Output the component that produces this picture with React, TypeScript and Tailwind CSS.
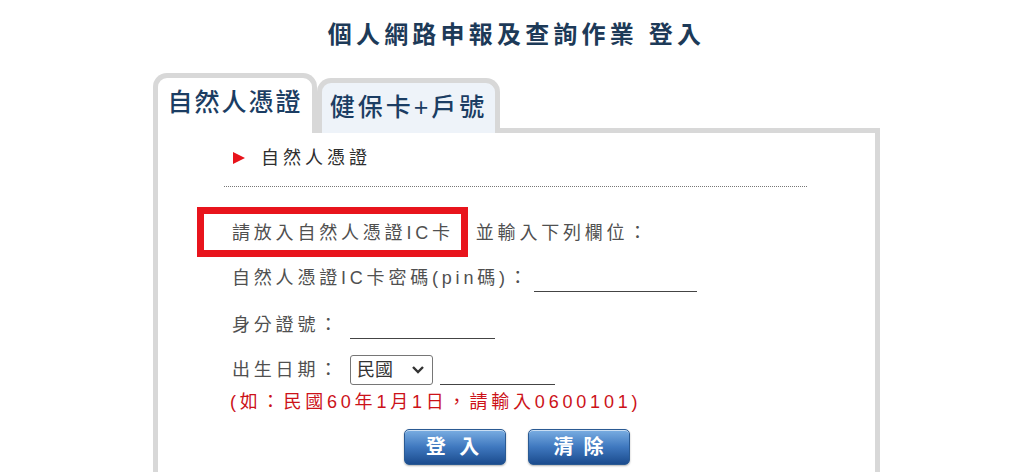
import React from "react";

const FONT = { fontFamily: '"Liberation Sans", "Noto Sans CJK TC", sans-serif' };

export default function App() {
  return (
    <div className="min-h-[472px] bg-white" style={FONT}>
      <div className="ml-[153px] w-[727px]">
        <h1 className="pt-[19px] h-[51px] text-center text-[24px] leading-[32px] font-bold tracking-[4.2px] text-[#1d3a58]">
          個人網路申報及查詢作業 登入
        </h1>

        {/* Tabs */}
        <div className="mt-[22px] flex items-end h-[60px]">
          <div className="relative z-10 w-[164px] h-[60px] rounded-t-[14px] border-[5px] border-b-0 border-[#d8d8d8] bg-white flex justify-center pt-[9px]">
            <span className="text-[25px] leading-[30px] font-medium tracking-[2px] text-[#1b3d63]">自然人憑證</span>
          </div>
          <div className="w-[183px] h-[55px] rounded-t-[14px] border-[5px] border-b-0 border-[#d8d8d8] bg-[#eef3f9] flex justify-center pt-[9px]">
            <span className="text-[25px] leading-[30px] font-medium tracking-[3px] text-[#1b3d63]">健保卡+戶號</span>
          </div>
        </div>

        {/* Panel */}
        <div className="-mt-[5px] h-[380px] border-[5px] border-b-0 border-[#d8d8d8] bg-white">
          <div className="ml-[66px] mt-[13px] pl-[9px] flex items-center h-[24px]">
            <svg width="12" height="12" viewBox="0 0 12 12" className="shrink-0">
              <polygon points="0,0 12,6 0,12" fill="#e8131b" />
            </svg>
            <span className="ml-[16px] text-[18px] leading-[24px] font-normal tracking-[4px] text-[#2e2e2e]">自然人憑證</span>
          </div>
          <div className="ml-[66px] mt-[16px] w-[583px] border-t border-dotted border-[#777]" />

          <div className="ml-[74px] text-[18px] tracking-[3.8px] text-[#505050]">
            <div className="mt-[31px] h-[30px] flex items-center">
              <span className="relative leading-[30px]">
                請放入自然人憑證IC卡
                <span className="absolute left-[-35px] top-[-11px] w-[271px] h-[50px] border-[7px] border-[#e8141c] pointer-events-none" />
              </span>
              <span className="ml-[22px] leading-[30px]">並輸入下列欄位：</span>
            </div>

            <div className="mt-[15px] h-[30px] flex items-end">
              <span className="leading-[30px] self-center">自然人憑證IC卡密碼(pin碼)：</span>
              <input
                type="password"
                className="ml-[3px] w-[163px] h-[26px] mb-[1px] bg-transparent border-0 border-b border-[#444] outline-none"
              />
            </div>

            <div className="mt-[17px] h-[30px] flex items-end">
              <span className="leading-[30px] self-center">身分證號：</span>
              <input
                type="text"
                className="ml-[9px] w-[145px] h-[26px] mb-[1px] bg-transparent border-0 border-b border-[#444] outline-none"
              />
            </div>

            <div className="mt-[15px] h-[30px] flex items-end">
              <span className="leading-[30px] self-center">出生日期：</span>
              <div className="relative ml-[9px] w-[83px] h-[30px]">
                <select className="appearance-none w-full h-full rounded-[3px] border border-[#767676] bg-white pl-[6px] text-[18px] tracking-normal text-[#333] outline-none">
                  <option>民國</option>
                  <option>西元</option>
                </select>
                <svg
                  className="absolute right-[8px] top-[10px] pointer-events-none"
                  width="14"
                  height="10"
                  viewBox="0 0 14 10"
                >
                  <polyline points="2,2 7,7 12,2" fill="none" stroke="#333" strokeWidth="2.4" />
                </svg>
              </div>
              <input
                type="text"
                className="ml-[7px] w-[115px] h-[26px] bg-transparent border-0 border-b border-[#444] outline-none"
              />
            </div>

            <div className="mt-[5px] h-[24px] leading-[24px] text-[#cc1219] tracking-[3.8px] ml-[-2px]">
              (如：民國60年1月1日，請輸入0600101)
            </div>
          </div>

          <div className="mt-[15px] flex justify-center gap-[22px]">
            <button className="w-[102px] h-[36px] rounded-[5px] border border-[#2a5a93] bg-gradient-to-b from-[#7aaee2] via-[#3f78bf] to-[#1b4c8e] shadow-[inset_0_1px_0_rgba(255,255,255,0.6),0_1px_2px_rgba(0,0,0,0.3)] text-white text-[20px] font-bold tracking-[4px] leading-[34px]">
              登 入
            </button>
            <button className="w-[102px] h-[36px] rounded-[5px] border border-[#2a5a93] bg-gradient-to-b from-[#7aaee2] via-[#3f78bf] to-[#1b4c8e] shadow-[inset_0_1px_0_rgba(255,255,255,0.6),0_1px_2px_rgba(0,0,0,0.3)] text-white text-[20px] font-bold tracking-[10px] pl-[10px] leading-[34px]">
              清除
            </button>
          </div>
        </div>
      </div>
    </div>
  );
}
